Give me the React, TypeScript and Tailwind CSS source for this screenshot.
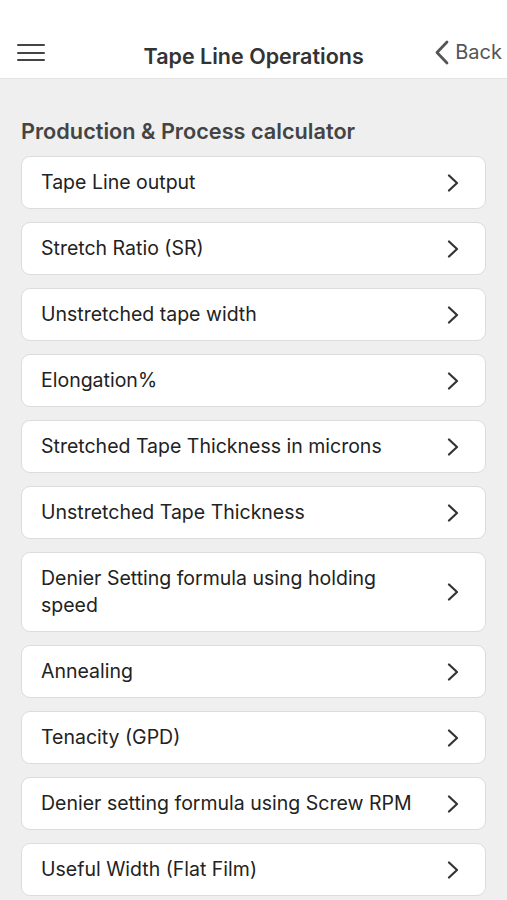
const items = [
  "Tape Line output",
  "Stretch Ratio (SR)",
  "Unstretched tape width",
  "Elongation%",
  "Stretched Tape Thickness in microns",
  "Unstretched Tape Thickness",
  "Denier Setting formula using holding speed",
  "Annealing",
  "Tenacity (GPD)",
  "Denier setting formula using Screw RPM",
  "Useful Width (Flat Film)",
];

export default function App() {
  return (
    <div className="min-h-[900px] bg-[#efefef] font-['Inter',sans-serif]">
      {/* Header */}
      <div className="flex h-[79px] items-end bg-white px-4 pb-[8px] border-b border-[#e4e4e4]">
        <div className="flex w-[29px] flex-col gap-[5.5px] pb-[9px] pl-[1px]">
          <span className="h-[2px] w-full rounded bg-[#444]" />
          <span className="h-[2px] w-full rounded bg-[#444]" />
          <span className="h-[2px] w-full rounded bg-[#444]" />
        </div>
        <div className="flex-1 text-center text-[21.5px] font-semibold leading-[28px] text-[#333] pl-[28px]">
          Tape Line Operations
        </div>
        <div className="flex items-center gap-[5px] text-[20px] leading-[28px] text-[#555] pb-[4px] -mr-[11px]">
          <svg width="16" height="25" viewBox="0 0 16 25" fill="none">
            <polyline points="13,2 3,12.5 13,23" stroke="#555" strokeWidth="2.8" strokeLinecap="round" strokeLinejoin="round" />
          </svg>
          <span>Back</span>
        </div>
      </div>

      {/* Content */}
      <div className="px-[21px] pt-[38px]">
        <div className="text-[21.7px] font-semibold leading-[28px] text-[#444] mb-[11px]">
          Production &amp; Process calculator
        </div>
        <div className="flex flex-col gap-[13px]">
          {items.map((t) => (
            <div
              key={t}
              className="flex items-center justify-between rounded-[9px] border border-[#dcdcdc] bg-white pl-[19px] pr-[26px] py-[12px]"
            >
              <span className="max-w-[382px] text-[19.5px] leading-[27px] text-[#222]">{t}</span>
              <svg width="12" height="18" viewBox="0 0 12 18" fill="none">
                <polyline points="2,1.5 10,9 2,16.5" stroke="#333" strokeWidth="2.2" strokeLinecap="round" strokeLinejoin="round" />
              </svg>
            </div>
          ))}
        </div>
      </div>
    </div>
  );
}
